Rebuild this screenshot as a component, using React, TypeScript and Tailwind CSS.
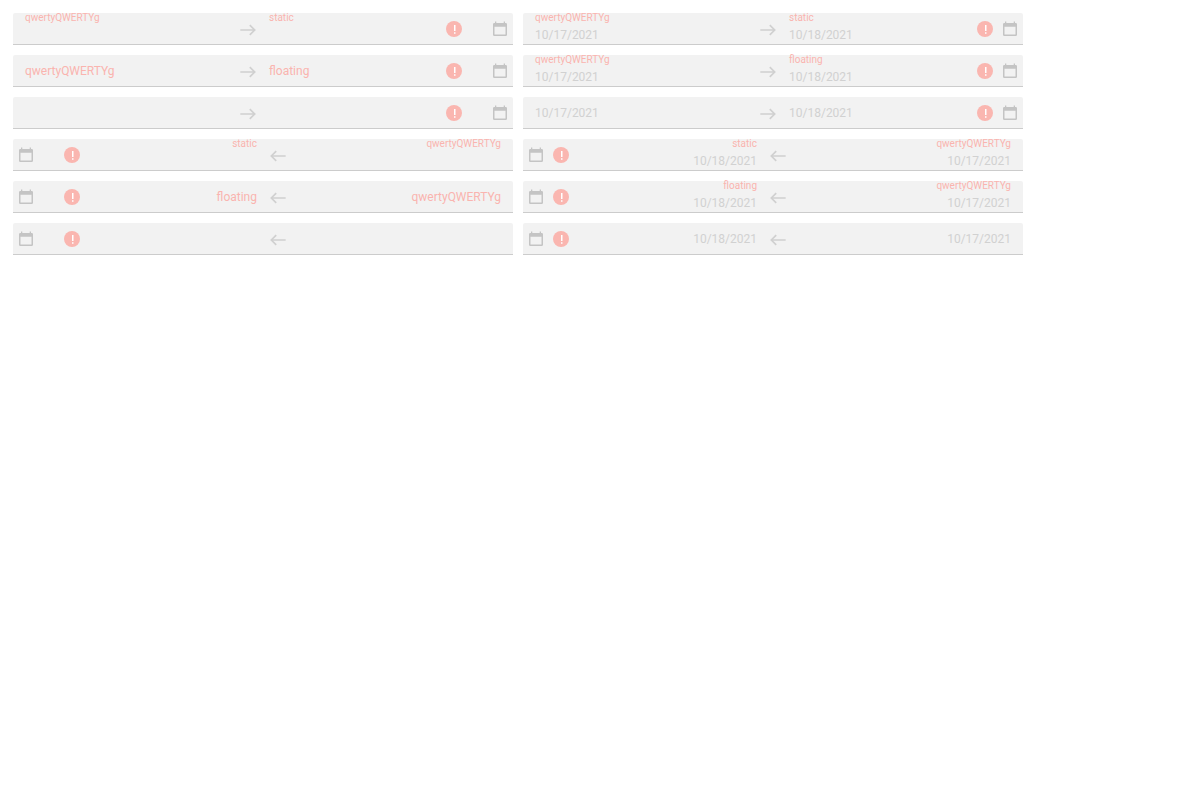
import { useId } from 'react';
import { clsx } from 'clsx';

type LabelMode = 'static' | 'floating' | 'hidden';

interface RangeProps {
  mode: LabelMode;
  rtl: boolean;
  start: string;
  end: string;
}

function ArrowIcon({ rtl }: { rtl: boolean }) {
  return (
    <svg
      viewBox="0 0 18 18"
      className={clsx('h-[18px] w-[18px] shrink-0 text-[#d0d0d0]', rtl && '-scale-x-100')}
      fill="none"
      stroke="currentColor"
      strokeWidth="1.700"
      aria-hidden="true"
    >
      <path d="M1.300 10H15.400M10.800 5.100l4.900 4.900-4.900 4.900" />
    </svg>
  );
}

function InvalidIcon() {
  return (
    <svg viewBox="0 0 16 16" className="h-4 w-4 shrink-0" role="img" aria-label="Invalid">
      <circle cx="8" cy="8" r="8" fill="#fab6b0" />
      <path d="M8 4h1.500v6H8zM8 11.200h1.500v1.600H8z" fill="#fff" />
    </svg>
  );
}

function CalendarIcon() {
  return (
    <svg viewBox="0 0 18 18" className="h-[18px] w-[18px]" aria-hidden="true">
      <path
        fill="#c4c4c4"
        fillRule="evenodd"
        d="M4 1.500h1.300V3h7.400V1.500H14V3h.7A1.300 1.300 0 0 1 16 4.300V14.700A1.300 1.300 0 0 1 14.700 16H3.300A1.300 1.300 0 0 1 2 14.700V4.300A1.300 1.300 0 0 1 3.300 3H4zM3.500 6.800v7.700h11V6.800z"
      />
    </svg>
  );
}

function DateField({ label, mode, value }: { label: string; mode: LabelMode; value: string }) {
  const id = useId();
  const resting = mode === 'floating' && !value;
  const raised = mode !== 'hidden' && !resting;
  return (
    <div className="relative flex h-full min-w-0 flex-1 flex-col">
      {mode !== 'hidden' && (
        <label
          htmlFor={id}
          className={clsx(
            'px-3 text-[#fab4af]',
            raised ? 'h-3 text-[10px] leading-[10px]' : 'absolute inset-0 text-xs leading-8',
          )}
        >
          {label}
        </label>
      )}
      <input
        id={id}
        type="text"
        disabled
        defaultValue={value}
        aria-label={mode === 'hidden' ? label : undefined}
        className="min-h-0 w-full min-w-0 flex-1 bg-transparent px-3 text-xs text-[#d1d1d1]"
      />
    </div>
  );
}

function DateRange({ mode, rtl, start, end }: RangeProps) {
  const filled = start !== '';
  return (
    <div
      dir={rtl ? 'rtl' : 'ltr'}
      className="flex h-8 items-center rounded-t-xs border-b border-[#cccccc] bg-[#f2f2f2]"
    >
      <div className={clsx('h-full shrink-0', filled ? 'w-[47.2%]' : 'w-[45.2%]')}>
        <DateField label="qwertyQWERTYg" mode={mode} value={start} />
      </div>
      <ArrowIcon rtl={rtl} />
      <DateField label={mode} mode={mode} value={end} />
      <div className={clsx('flex items-center pe-1', filled ? 'gap-2' : 'gap-[29px]')}>
        <InvalidIcon />
        <button type="button" disabled aria-label="Select">
          <CalendarIcon />
        </button>
      </div>
    </div>
  );
}

const modes: LabelMode[] = ['static', 'floating', 'hidden'];

export default function App() {
  return (
    <main className="grid w-full max-w-[1036px] grid-cols-2 gap-[10px] p-[13px] font-[Roboto,sans-serif]">
      {[false, true].map((rtl) =>
        modes.map((mode) => [
          <DateRange key={`${rtl}-${mode}-empty`} mode={mode} rtl={rtl} start="" end="" />,
          <DateRange key={`${rtl}-${mode}-filled`} mode={mode} rtl={rtl} start="10/17/2021" end="10/18/2021" />,
        ]),
      )}
    </main>
  );
}
